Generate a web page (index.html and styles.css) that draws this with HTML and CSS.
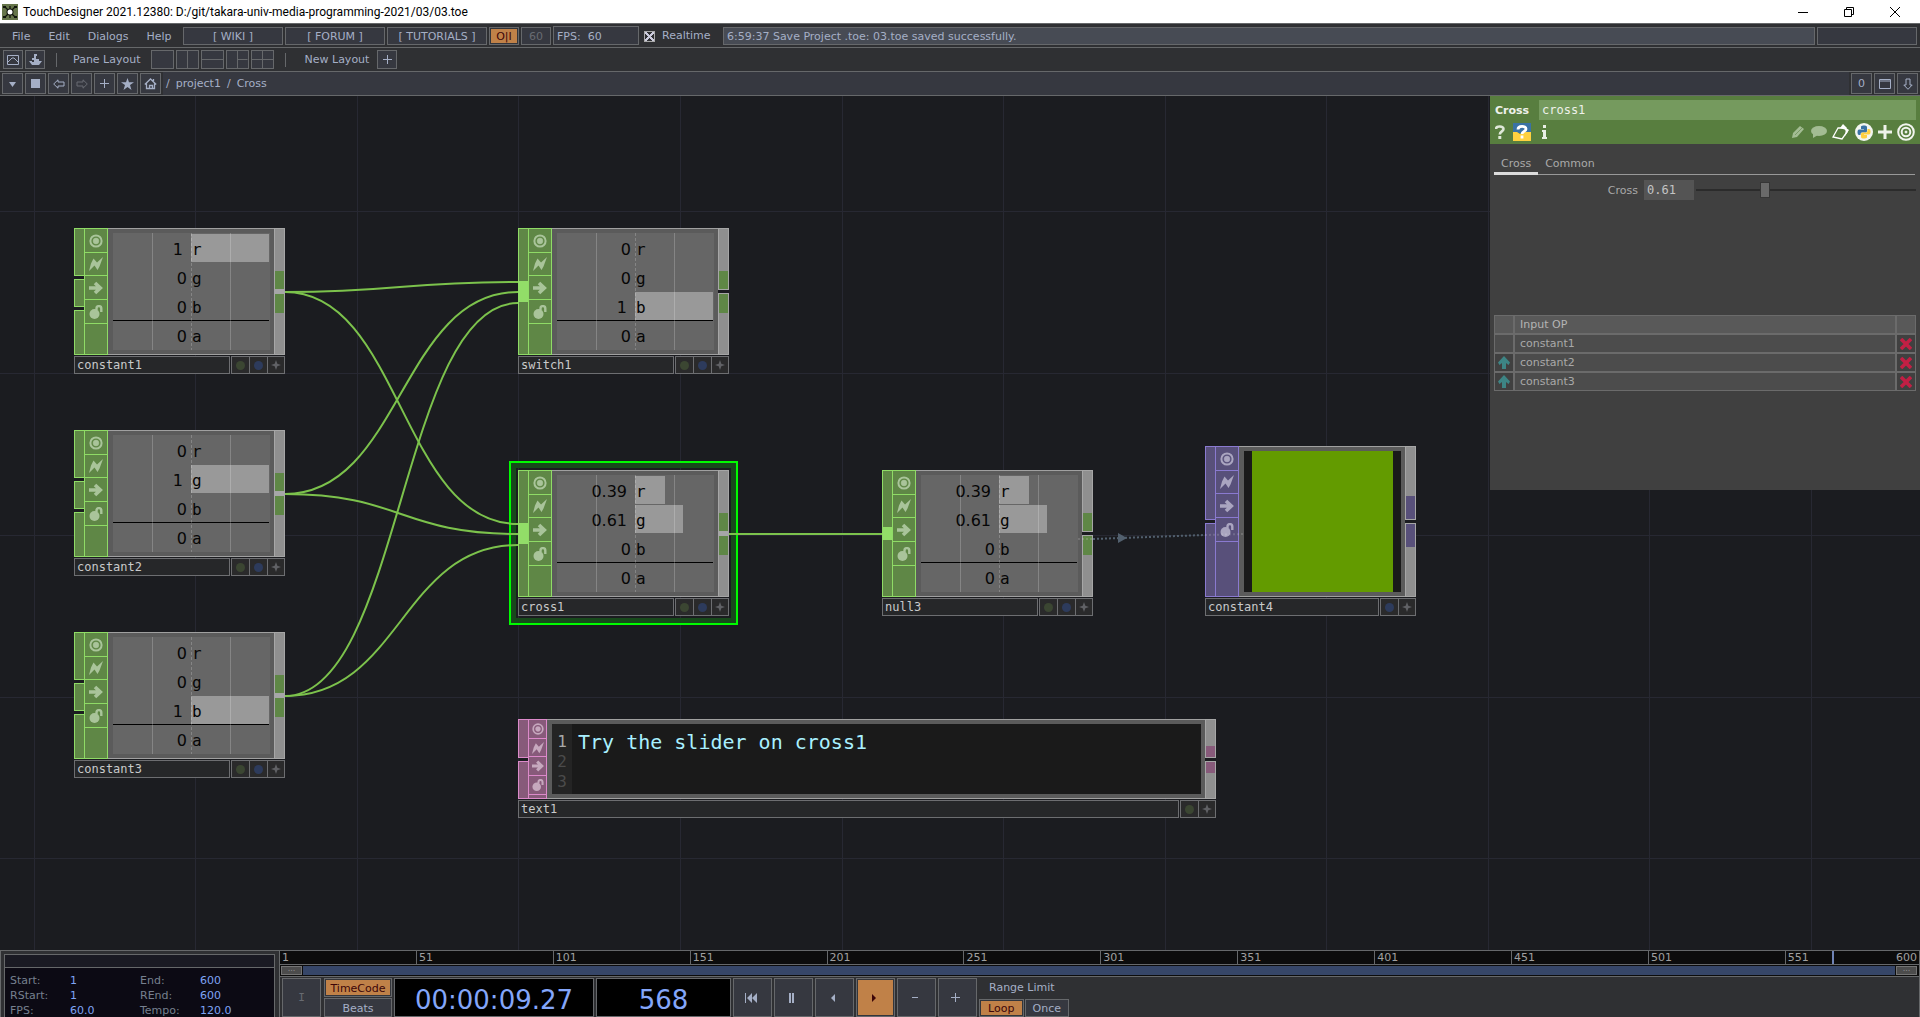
FILE: index.html
```html
<!DOCTYPE html>
<html lang="en">
<head>
<meta charset="utf-8">
<title>TouchDesigner 2021.12380: D:/git/takara-univ-media-programming-2021/03/03.toe</title>
<link rel="stylesheet" href="styles.css">
</head>
<body>
<svg class="defs" aria-hidden="true">
  <symbol id="i-view" viewBox="0 0 14 14"><circle cx="7" cy="7" r="5.6" fill="none" stroke="currentColor" stroke-width="2"/><circle cx="7" cy="7" r="2.9" fill="currentColor" stroke="currentColor" stroke-opacity=".5"/></symbol>
  <symbol id="i-bolt" viewBox="0 0 14 14"><path fill="currentColor" d="M14 0 10.500 9.500 8.500 13 5.500 8.500 0 14 2 6.500 4.500 1.500 8 5.500z"/></symbol>
  <symbol id="i-arrow" viewBox="0 0 14 14"><path fill="none" stroke="currentColor" stroke-width="3.600" d="M0 7h11M6 2l5.300 5L6 12"/></symbol>
  <symbol id="i-lock" viewBox="0 0 14 14"><circle cx="5.500" cy="9" r="5" fill="currentColor"/><path fill="none" stroke="currentColor" stroke-width="2.400" d="M7.500 5V3.500a2.300 2.300 0 0 1 4.800 0V7"/></symbol>
  <symbol id="i-star4" viewBox="0 0 10 10"><path fill="currentColor" d="M5 0 6.300 3.700 10 5 6.300 6.300 5 10 3.700 6.300 0 5 3.700 3.700z"/></symbol>
  <symbol id="i-x" viewBox="0 0 12 12"><path fill="none" stroke="#c21f44" stroke-width="3.600" d="M1 1l10 10M11 1 1 11"/></symbol>
  <symbol id="i-up" viewBox="0 0 12 13"><path fill="#3d8585" d="M6 0l6 6.500-1.500 2.500L8 7v6H4V7L1.500 9 0 6.500z"/></symbol>
</svg>

<header class="titlebar">
  <svg class="app-icon" width="16" height="16" viewBox="0 0 16 16"><path fill="#66754a" d="M0 0h16v16H0z"/><path d="M3 3l10 10M13 3 3 13M8 2v12" stroke="#11140c" stroke-width="1.300"/><path fill="#11140c" d="M1 2h3v2H1zM12 2h3v2h-3zM1 12h3v2H1zM12 12h3v2h-3z"/><circle cx="8" cy="8" r="3.500" fill="#11140c"/><circle cx="8" cy="8" r="2.500" fill="#fff"/></svg>
  <h1>TouchDesigner 2021.12380: D:/git/takara-univ-media-programming-2021/03/03.toe</h1>
  <div class="window-controls">
    <button aria-label="Minimize"><svg width="10" height="10"><path d="M0 5.500h10" stroke="#000"/></svg></button>
    <button aria-label="Restore"><svg width="10" height="10"><path d="M.5 2.500h7v7h-7zM2.500 2.500v-2h7v7h-2" fill="none" stroke="#000"/></svg></button>
    <button aria-label="Close"><svg width="10" height="10"><path d="M0 0l10 10M10 0 0 10" stroke="#000"/></svg></button>
  </div>
</header>

<nav class="bar menu">
  <div class="menu-items"><button>File</button><button>Edit</button><button>Dialogs</button><button>Help</button></div>
  <a class="box link" href="#wiki">[ WIKI ]</a>
  <a class="box link" href="#forum">[ FORUM ]</a>
  <a class="box link" href="#tutorials">[ TUTORIALS ]</a>
  <button class="box small on">O|I</button>
  <button class="box small dim">60</button>
  <output class="box fps">FPS:&nbsp; 60</output>
  <label class="realtime"><input type="checkbox" checked>Realtime</label>
  <output class="box status">6:59:37 Save Project .toe: 03.toe saved successfully.</output>
  <output class="box spare"></output>
</nav>

<div class="bar layouts">
  <button class="box tool" aria-label="Palette"><svg width="12" height="10"><path d="M.5.5h11v9H.5zM1 7l4-4h2l4 4" fill="none" stroke="currentColor"/></svg></button>
  <button class="box tool" aria-label="Place"><svg width="13" height="12" fill="currentColor"><path d="M5 0h3v2H7v3h3v2h3L10 11H3L0 7h3v1h2V6H3V4h2z"/></svg></button>
  <i class="rule"></i>
  <span>Pane Layout</span>
  <div class="panes">
    <button class="pane" aria-label="Single"></button>
    <button class="pane v" aria-label="Split columns"></button>
    <button class="pane h" aria-label="Split rows"></button>
    <button class="pane v hr" aria-label="Three panes"></button>
    <button class="pane v h both" aria-label="Four panes"></button>
  </div>
  <i class="rule"></i>
  <span class="new">New Layout</span>
  <button class="box tool" aria-label="Add layout"><svg width="9" height="9"><path d="M0 4.500h9M4.500 0v9" stroke="currentColor"/></svg></button>
</div>

<div class="bar path">
  <button class="box sq" aria-label="Pane type"><svg width="9" height="9"><path d="M1 3h7L4.500 8z" fill="currentColor"/></svg></button>
  <button class="box sq" aria-label="Stop"><svg width="9" height="9"><path d="M0 0h9v9H0z" fill="currentColor"/></svg></button>
  <button class="box sq" aria-label="Back"><svg width="12" height="10"><path d="M.7 5 5 .8V3h6v4H5v2.200z" fill="none" stroke="currentColor"/></svg></button>
  <button class="box sq dim" aria-label="Forward"><svg width="12" height="10"><path d="M11.300 5 7 .8V3H1v4h6v2.200z" fill="none" stroke="currentColor"/></svg></button>
  <button class="box sq" aria-label="Add"><svg width="9" height="9"><path d="M0 4.500h9M4.500 0v9" stroke="currentColor"/></svg></button>
  <button class="box sq" aria-label="Bookmark"><svg width="13" height="12"><path d="M6.500 0 8 4.200h5L9 7l1.500 5-4-3-4 3L4 7 0 4.200h5z" fill="currentColor"/></svg></button>
  <button class="box sq" aria-label="Home"><svg width="13" height="12"><path d="M.8 6.500 6.500 1l5.700 5.500M2.500 5.500v5h8v-5M5.500 10.500v-3h3v3M9.500 3V1" fill="none" stroke="currentColor" stroke-width="1.300"/></svg></button>
  <div class="crumbs"><span>/</span><a href="#project1">project1</a><span>/</span><a href="#cross">Cross</a></div>
  <button class="box sq">0</button>
  <button class="box sq" aria-label="Maximize pane"><svg width="12" height="10"><path d="M.5.5h11v9H.5zM0 2h12" fill="none" stroke="currentColor"/></svg></button>
  <button class="box sq" aria-label="Float pane"><svg width="10" height="12"><path d="M5 11.300.8 7H3V1h4v6h2.200z" fill="none" stroke="currentColor"/></svg></button>
</div>

<main class="network">
  <svg class="grid" width="100%" height="100%" aria-hidden="true"><path d="M34.500 0V854M195.500 0V854M357.500 0V854M518.500 0V854M680.500 0V854M842.500 0V854M1003.500 0V854M1165.500 0V854M1326.500 0V854M1488.500 0V854M1649.500 0V854M1811.500 0V854M0 115.500H1920M0 277.500H1920M0 439.500H1920M0 601.500H1920M0 762.500H1920" stroke="#272832"/></svg>

  <article class="node chop n-constant1">
    <div class="in three"><i></i><i></i><i></i></div>
    <div class="flags"><button aria-label="Viewer"><svg><use href="#i-view"/></svg></button><button aria-label="Bypass"><svg><use href="#i-bolt"/></svg></button><button aria-label="Export"><svg><use href="#i-arrow"/></svg></button><button aria-label="Lock"><svg><use href="#i-lock"/></svg></button></div>
    <div class="view"><div class="channels">
      <div class="ch live"><b>1</b><span><i style="width:100%"></i>r</span></div>
      <div class="ch"><b>0</b><span>g</span></div>
      <div class="ch"><b>0</b><span>b</span></div>
      <div class="ch"><b>0</b><span>a</span></div>
    </div></div>
    <div class="out joined"><i></i><i></i></div>
    <footer><h2>constant1</h2><button aria-label="Display"><i class="dot green"></i></button><button aria-label="Render"><i class="dot blue"></i></button><button aria-label="Active"><svg><use href="#i-star4"/></svg></button></footer>
  </article>

  <article class="node chop n-constant2">
    <div class="in three"><i></i><i></i><i></i></div>
    <div class="flags"><button aria-label="Viewer"><svg><use href="#i-view"/></svg></button><button aria-label="Bypass"><svg><use href="#i-bolt"/></svg></button><button aria-label="Export"><svg><use href="#i-arrow"/></svg></button><button aria-label="Lock"><svg><use href="#i-lock"/></svg></button></div>
    <div class="view"><div class="channels">
      <div class="ch"><b>0</b><span>r</span></div>
      <div class="ch live"><b>1</b><span><i style="width:100%"></i>g</span></div>
      <div class="ch"><b>0</b><span>b</span></div>
      <div class="ch"><b>0</b><span>a</span></div>
    </div></div>
    <div class="out joined"><i></i><i></i></div>
    <footer><h2>constant2</h2><button aria-label="Display"><i class="dot green"></i></button><button aria-label="Render"><i class="dot blue"></i></button><button aria-label="Active"><svg><use href="#i-star4"/></svg></button></footer>
  </article>

  <article class="node chop n-constant3">
    <div class="in three"><i></i><i></i><i></i></div>
    <div class="flags"><button aria-label="Viewer"><svg><use href="#i-view"/></svg></button><button aria-label="Bypass"><svg><use href="#i-bolt"/></svg></button><button aria-label="Export"><svg><use href="#i-arrow"/></svg></button><button aria-label="Lock"><svg><use href="#i-lock"/></svg></button></div>
    <div class="view"><div class="channels">
      <div class="ch"><b>0</b><span>r</span></div>
      <div class="ch"><b>0</b><span>g</span></div>
      <div class="ch live"><b>1</b><span><i style="width:100%"></i>b</span></div>
      <div class="ch"><b>0</b><span>a</span></div>
    </div></div>
    <div class="out joined"><i></i><i></i></div>
    <footer><h2>constant3</h2><button aria-label="Display"><i class="dot green"></i></button><button aria-label="Render"><i class="dot blue"></i></button><button aria-label="Active"><svg><use href="#i-star4"/></svg></button></footer>
  </article>

  <article class="node chop n-switch1">
    <div class="in wired"><i></i></div>
    <div class="flags"><button aria-label="Viewer"><svg><use href="#i-view"/></svg></button><button aria-label="Bypass"><svg><use href="#i-bolt"/></svg></button><button aria-label="Export"><svg><use href="#i-arrow"/></svg></button><button aria-label="Lock"><svg><use href="#i-lock"/></svg></button></div>
    <div class="view"><div class="channels">
      <div class="ch"><b>0</b><span>r</span></div>
      <div class="ch"><b>0</b><span>g</span></div>
      <div class="ch live"><b>1</b><span><i style="width:100%"></i>b</span></div>
      <div class="ch"><b>0</b><span>a</span></div>
    </div></div>
    <div class="out"><i></i><i></i></div>
    <footer><h2>switch1</h2><button aria-label="Display"><i class="dot green"></i></button><button aria-label="Render"><i class="dot blue"></i></button><button aria-label="Active"><svg><use href="#i-star4"/></svg></button></footer>
  </article>

  <div class="selection"></div>
  <article class="node chop n-cross1">
    <div class="in wired"><i></i></div>
    <div class="flags"><button aria-label="Viewer"><svg><use href="#i-view"/></svg></button><button aria-label="Bypass"><svg><use href="#i-bolt"/></svg></button><button aria-label="Export"><svg><use href="#i-arrow"/></svg></button><button aria-label="Lock"><svg><use href="#i-lock"/></svg></button></div>
    <div class="view"><div class="channels">
      <div class="ch live"><b>0.39</b><span><i style="width:39%"></i>r</span></div>
      <div class="ch live"><b>0.61</b><span><i style="width:61%"></i>g</span></div>
      <div class="ch"><b>0</b><span>b</span></div>
      <div class="ch"><b>0</b><span>a</span></div>
    </div></div>
    <div class="out joined"><i></i><i></i></div>
    <footer><h2>cross1</h2><button aria-label="Display"><i class="dot green"></i></button><button aria-label="Render"><i class="dot blue"></i></button><button aria-label="Active"><svg><use href="#i-star4"/></svg></button></footer>
  </article>

  <article class="node chop n-null3">
    <div class="in wired single"><i></i></div>
    <div class="flags"><button aria-label="Viewer"><svg><use href="#i-view"/></svg></button><button aria-label="Bypass"><svg><use href="#i-bolt"/></svg></button><button aria-label="Export"><svg><use href="#i-arrow"/></svg></button><button aria-label="Lock"><svg><use href="#i-lock"/></svg></button></div>
    <div class="view"><div class="channels">
      <div class="ch live"><b>0.39</b><span><i style="width:39%"></i>r</span></div>
      <div class="ch live"><b>0.61</b><span><i style="width:61%"></i>g</span></div>
      <div class="ch"><b>0</b><span>b</span></div>
      <div class="ch"><b>0</b><span>a</span></div>
    </div></div>
    <div class="out"><i></i><i></i></div>
    <footer><h2>null3</h2><button aria-label="Display"><i class="dot green"></i></button><button aria-label="Render"><i class="dot blue"></i></button><button aria-label="Active"><svg><use href="#i-star4"/></svg></button></footer>
  </article>

  <article class="node top n-constant4">
    <div class="in two"><i></i><i></i></div>
    <div class="flags"><button aria-label="Viewer"><svg><use href="#i-view"/></svg></button><button aria-label="Bypass"><svg><use href="#i-bolt"/></svg></button><button aria-label="Export"><svg><use href="#i-arrow"/></svg></button><button aria-label="Lock"><svg><use href="#i-lock"/></svg></button></div>
    <div class="view"><div class="swatch"></div></div>
    <div class="out"><i></i><i></i></div>
    <footer><h2>constant4</h2><button aria-label="Render"><i class="dot blue"></i></button><button aria-label="Active"><svg><use href="#i-star4"/></svg></button></footer>
  </article>

  <article class="node dat n-text1">
    <div class="in two"><i></i><i></i></div>
    <div class="flags"><button aria-label="Viewer"><svg><use href="#i-view"/></svg></button><button aria-label="Bypass"><svg><use href="#i-bolt"/></svg></button><button aria-label="Export"><svg><use href="#i-arrow"/></svg></button><button aria-label="Lock"><svg><use href="#i-lock"/></svg></button></div>
    <div class="view"><div class="editor"><ol><li>1</li><li>2</li><li>3</li></ol><p>Try the slider on cross1</p></div></div>
    <div class="out"><i></i><i></i></div>
    <footer><h2>text1</h2><button aria-label="Display"><i class="dot green"></i></button><button aria-label="Active"><svg><use href="#i-star4"/></svg></button></footer>
  </article>

  <svg class="wires" width="100%" height="100%" aria-hidden="true">
    <g fill="none" stroke="#7cc24c" stroke-width="2">
      <path d="M285 196C400 196 400 186 518 186"/>
      <path d="M285 196C401 196 401 428 518 428"/>
      <path d="M285 398C401 398 401 196 518 196"/>
      <path d="M285 398C401 398 401 438 518 438"/>
      <path d="M285 600C401 600 401 207 518 207"/>
      <path d="M285 600C401 600 401 449 518 449"/>
      <path d="M729 438H882"/>
    </g>
    <path d="M1093 443 1205 439" stroke="#52606e" stroke-width="2" stroke-dasharray="2 2"/>
    <path d="M1205 439 1244 438M1078 443h14" stroke="#fff" stroke-opacity=".15" stroke-width="2" stroke-dasharray="2 2"/>
    <path d="M1118 437l9 5-9 5z" fill="#52606e"/>
  </svg>

  <aside class="params">
    <div class="head">
      <div class="title"><label for="opname">Cross</label><input id="opname" value="cross1"></div>
      <div class="icons">
        <button aria-label="Help"><svg width="10" height="14"><path d="M1 4C1 1 8.500.5 8.500 4 8.500 6.500 4.800 6.300 4.800 9.500" fill="none" stroke="#dfe8d8" stroke-width="2.600"/><path d="M3.300 11h3v3h-3z" fill="#dfe8d8"/></svg></button>
        <button aria-label="Python help"><svg width="18" height="18"><path fill="#3a72a4" d="M0 0h18v10H0z"/><path fill="#ffd13f" d="M0 9h4l3 2 5-2h6v9H0z"/><path d="M5 6.500C5 2.500 13 2.500 13 6c0 2.500-4 2.300-4 5M9 12.500v3" fill="none" stroke="#fff" stroke-width="2.800"/></svg></button>
        <button aria-label="Info"><svg width="6" height="14"><path d="M1 0h3v3H1zM0 5h4v7h1v2H0v-2h1V7H0z" fill="#e8eee4"/></svg></button>
        <i class="grow"></i>
        <button aria-label="Edit"><svg width="14" height="14"><path d="M1 13 2 8 9 1l4 3-7 8z" fill="#a3bc93"/><path d="M4 10l7-7" stroke="#7a9a66"/></svg></button>
        <button aria-label="Comment"><svg width="17" height="14"><ellipse cx="9" cy="6" rx="8" ry="5" fill="#a3bc93"/><path d="M3 8v5l5-3z" fill="#a3bc93"/></svg></button>
        <button aria-label="Copy parameters"><svg width="18" height="16"><path d="M6 4 1 13l9 2 5-7-2-4z" fill="none" stroke="#fff" stroke-width="1.300"/><path d="M8 4l3-4 4 4-1 2zM14 4l3 2-4 6z" fill="#fff"/></svg></button>
        <button aria-label="Python"><svg width="18" height="18"><circle cx="9" cy="9" r="9" fill="#f2f5f0"/><path d="M6 3.500C7 2 12 2 12 4v4c0 1-1 1.500-2 1.500H7C5.500 9.500 5.500 11 5.500 12H4C2 12 2 6.500 4 6.500h5V6H6z" fill="#3a72a4"/><path d="M12 14.500C11 16 6 16 6 14v-3c0-1 1-1.500 2-1.500h3C12.500 9.500 12.500 8 12.500 6H14c2 0 2 5.500 0 5.500H9v.5h3z" fill="#ffcf3f"/></svg></button>
        <button aria-label="Add"><svg width="14" height="14"><path d="M0 7h14M7 0v14" stroke="#eef2ea" stroke-width="3"/></svg></button>
        <button aria-label="View"><svg width="18" height="18" fill="none" stroke="#f2f5ef" stroke-width="2"><circle cx="9" cy="9" r="7.800"/><circle cx="9" cy="9" r="4.300"/><circle cx="9" cy="9" r="1" fill="#fff" stroke-width="1"/></svg></button>
      </div>
    </div>
    <div class="tabs"><button class="active">Cross</button><button>Common</button></div>
    <div class="field"><label for="cross">Cross</label><input id="cross" class="num" value="0.61"><input type="range" aria-label="Cross" min="0" max="2" step="0.01" value="0.61"></div>
    <table>
      <tr><th></th><th scope="col">Input OP</th><th></th></tr>
      <tr><td></td><td>constant1</td><td class="act"><svg width="12" height="12"><use href="#i-x"/></svg></td></tr>
      <tr><td class="act"><svg width="12" height="13"><use href="#i-up"/></svg></td><td>constant2</td><td class="act"><svg width="12" height="12"><use href="#i-x"/></svg></td></tr>
      <tr><td class="act"><svg width="12" height="13"><use href="#i-up"/></svg></td><td>constant3</td><td class="act"><svg width="12" height="12"><use href="#i-x"/></svg></td></tr>
    </table>
  </aside>
</main>

<section class="timeline">
  <div class="info">
    <div class="info-box">
      <div class="info-head"></div>
      <dl><dt>Start:</dt><dd>1</dd><dt>End:</dt><dd>600</dd><dt>RStart:</dt><dd>1</dd><dt>REnd:</dt><dd>600</dd><dt>FPS:</dt><dd>60.0</dd><dt>Tempo:</dt><dd>120.0</dd></dl>
    </div>
  </div>
  <div class="transport">
    <div class="ruler"><span>1</span><span>51</span><span>101</span><span>151</span><span>201</span><span>251</span><span>301</span><span>351</span><span>401</span><span>451</span><span>501</span><span class="last">551<em>600</em></span><i class="playhead" style="left:94.7%"></i></div>
    <div class="range"><button aria-label="Range start">...</button><i></i><button aria-label="Range end">...</button></div>
    <div class="controls">
      <button class="box play dim mono">I</button>
      <div class="mode"><button class="box on">TimeCode</button><button class="box">Beats</button></div>
      <output class="box screen code">00:00:09.27</output>
      <output class="box screen frame">568</output>
      <button class="box play" aria-label="To start"><svg width="12" height="10" fill="currentColor"><path d="M0 0h1v10H0zM7 0v10L2 5zM12 0v10L7 5z"/></svg></button>
      <button class="box play" aria-label="Pause"><svg width="5" height="10" fill="currentColor"><path d="M0 0h2v10H0zM3 0h2v10H3z"/></svg></button>
      <button class="box play" aria-label="Play backwards"><svg width="4" height="8" fill="currentColor"><path d="M4 0v8L0 4z"/></svg></button>
      <button class="box play on" aria-label="Play"><svg width="4" height="8" fill="currentColor"><path d="M0 0v8l4-4z"/></svg></button>
      <button class="box play" aria-label="Step back"><svg width="6" height="9"><path d="M0 4.500h6" stroke="currentColor"/></svg></button>
      <button class="box play" aria-label="Step forward"><svg width="9" height="9"><path d="M0 4.500h9M4.500 0v9" stroke="currentColor"/></svg></button>
      <div class="limit"><span>Range Limit</span><div><button class="box on">Loop</button><button class="box">Once</button></div></div>
    </div>
  </div>
</section>
</body>
</html>
```
FILE: styles.css
```css
* { box-sizing: border-box; }
body {
  margin: 0;
  height: 100vh;
  display: flex;
  flex-direction: column;
  overflow: hidden;
  background: #2f3033;
  color: #a5afc6;
  font: 11px/14px "DejaVu Sans", Verdana, sans-serif;
}
button, input, output { font: inherit; color: inherit; }
button { background: none; border: 0; padding: 0; display: flex; align-items: center; justify-content: center; }
a { color: inherit; text-decoration: none; }
h1, h2, p, ol, dl, dd { margin: 0; padding: 0; font-weight: normal; }
svg { display: block; flex: none; }
.defs { position: absolute; width: 0; height: 0; }

/* window title */
.titlebar { height: 23px; flex: none; display: flex; align-items: center; background: #fff; color: #000; padding: 0 2px; gap: 5px; }
.titlebar h1 { flex: 1; font: 12px/16px Roboto, "Open Sans", sans-serif; }
.window-controls { display: flex; }
.window-controls button { width: 46px; height: 20px; }

/* toolbars */
.bar { height: 24px; flex: none; display: flex; align-items: center; border-top: 1px solid #66686a; }
.box { background: #363840; border: 1px solid #66686b; }
.on { background: #c08148; color: #3c0508; box-shadow: inset 0 0 0 1px #33353b; }
.dim { color: #686b72; }
.menu { gap: 2px; padding-right: 3px; }
.menu-items { display: flex; gap: 18px; width: 181px; padding: 2px 0 0 12px; }
.link { width: 100px; height: 18px; line-height: 18px; text-align: center; }
.small { width: 30px; height: 18px; padding-top: 2px; }
.fps { width: 86px; height: 19px; line-height: 19px; padding-left: 3px; }
.realtime { display: flex; align-items: center; gap: 7px; width: 80px; padding: 1px 0 0 3px; }
.realtime input { appearance: none; margin: 0; width: 11px; height: 11px; border: 1px solid #a9a9a9;
  background: linear-gradient(45deg, transparent 42%, #ccd 42% 58%, transparent 58%), linear-gradient(-45deg, transparent 42%, #ccd 42% 58%, transparent 58%); }
.status { flex: 1; height: 18px; line-height: 18px; padding-left: 3px; background: #474b54; }
.spare { width: 100px; height: 18px; }

.layouts { padding-left: 3px; gap: 2px; line-height: 16px; }
.layouts span { padding-top: 1px; }
.tool { width: 20px; height: 19px; }
.rule { width: 1px; height: 14px; background: #66686b; margin: 0 14px 0 9px; }
.panes { display: flex; gap: 2px; padding-left: 8px; }
.layouts .new { padding: 1px 6px 0 3px; }
.pane { width: 23px; height: 19px; border: 1px solid #66686b; background-color: #363840; background-repeat: no-repeat; background-position: center; --v: linear-gradient(#66686b, #66686b); }
.pane.v { background-image: var(--v); background-size: 1px 100%; }
.pane.h { background-image: var(--v); background-size: 100% 1px; }
.pane.hr { background-image: var(--v), var(--v); background-size: 1px 100%, 50% 1px; background-position: center, right center; }
.pane.both { background-image: var(--v), var(--v); background-size: 1px 100%, 100% 1px; }

.path { gap: 2px; padding: 0 2px; }
.sq { width: 21px; height: 21px; }
.crumbs { flex: 1; align-self: stretch; display: flex; gap: 6px; line-height: 24px; padding-left: 3px; background: #363840; }

/* network canvas */
.network { flex: 1; position: relative; overflow: hidden; border-top: 1px solid #66686a; background: #1b1c20; }
.grid, .wires { position: absolute; left: 0; top: 0; pointer-events: none; }

.node { position: absolute; width: 211px; display: grid; grid-template-columns: 10px 24px 1fr 11px; grid-template-rows: 127px 18px; row-gap: 1px; }
.n-constant1 { left: 74px; top: 132px; }
.n-constant2 { left: 74px; top: 334px; }
.n-constant3 { left: 74px; top: 536px; }
.n-switch1 { left: 518px; top: 132px; }
.n-cross1 { left: 518px; top: 374px; }
.n-null3 { left: 882px; top: 374px; }
.n-constant4 { left: 1205px; top: 350px; grid-template-rows: 151px 18px; }
.n-text1 { left: 518px; top: 623px; width: 698px; grid-template-columns: 10px 19px 1fr 11px; grid-template-rows: 80px 18px; }
.chop { --fill: #5f8746; --line: #8fdb66; --glyph: #a9c49a; --patch: 18px; }
.top { --fill: #58507a; --line: #8a7ad0; --glyph: #aaa5c0; --patch: 23px; }
.dat { --fill: #875a7a; --line: #dc8aca; --glyph: #c6a8be; --patch: 11px; }

.in { display: grid; gap: 3px; }
.in i { background: var(--fill); border: 1px solid var(--line); border-right: 0; }
.three { grid-template-rows: 48px 28px 1fr; }
.two { grid-template-rows: 1fr 1fr; }
.wired i { display: flex; align-items: center; }
.wired i::before { content: ""; width: 100%; height: 21px; background: #92dd68; }
.single i::before { height: 13px; }

.flags { display: grid; grid-template-rows: 24px 23px 24px 24px 1fr; background: var(--fill); border: 1px solid var(--line); color: var(--glyph); overflow: hidden; }
.flags button { border-bottom: 1px solid var(--line); }
.flags svg { width: 14px; height: 14px; }
.dat .flags { grid-template-rows: 19px 18px 19px 19px 1fr; }
.dat .flags svg { width: 12px; height: 12px; }

.view { padding: 4px 4px 4px 5px; background: #5b5b5b; border: solid #a0a0a0; border-width: 1px 0; }
.channels { position: relative; isolation: isolate; height: 117px; width: 157px; padding-top: 1px; background: #666; color: #060606; font: 16px/31px "DejaVu Sans Mono", monospace; }
.channels::after { content: ""; position: absolute; inset: 0; background:
  linear-gradient(90deg, transparent 39px, #ffffff33 39px 40px, transparent 40px 117px, #ffffff33 117px 118px, transparent 118px),
  repeating-linear-gradient(#ffffff33 0 3px, transparent 3px 5px) 78px 0 / 1px 100% no-repeat; }
.ch { display: grid; grid-template-columns: 78px 78px; width: 156px; height: 29px; }
.ch b { font: 16px/31px "DejaVu Sans", sans-serif; text-align: right; padding-right: 4px; }
.ch.live b { padding-right: 8px; }
.ch:nth-child(3) { border-bottom: 1px solid #000; }
.ch span { position: relative; height: 28px; text-indent: 1px; }
.ch span i { position: absolute; left: 0; top: 0; z-index: -1; height: 28px; background: #999; }

.swatch { height: 141px; background: #639b00; border: solid #1a1a1a; border-width: 0 8px; }

.editor { display: flex; height: 70px; padding-top: 8px; background: linear-gradient(90deg, #242424 20px, #1a1a1a 20px); }
.editor ol { list-style: none; width: 20px; text-align: center; color: #4b4b4b; font: 16px/20px "DejaVu Sans Mono", monospace; }
.editor li:first-child { color: #a8a8a8; }
.editor p { padding-left: 6px; color: #a9f0ff; font: 20px/20px "DejaVu Sans Mono", monospace; }

.out { display: grid; grid-template-rows: 1fr 1fr; gap: 3px; }
.out i { display: flex; background: #8f8f8f; border: 1px solid #a6a6a6; }
.out i:first-child { align-items: flex-end; }
.out i::before { content: ""; width: 100%; height: var(--patch); background: var(--fill); }
.joined { background: #a6a6a8; }
.chop .out i:last-child::before { height: 19px; }

.node footer { grid-column: 1 / -1; display: flex; color: #606165; }
.node footer h2 { flex: 1; margin-right: 1px; padding-left: 2px; border: 1px solid #6d6e71; background: #262729; color: #c9cacb; font: 12px/16px "DejaVu Sans Mono", monospace; }
.node footer button { width: 18px; border: solid #6d6e71; border-width: 1px 0 1px 1px; background: #2a2a2b; }
.node footer button:last-child { border-right-width: 1px; }
.node footer svg { width: 10px; height: 10px; }
.dot { width: 9px; height: 9px; border-radius: 50%; }
.dot.green { background: #3b4632; }
.dot.blue { background: #2d3b5c; }

.selection { position: absolute; left: 509px; top: 365px; width: 229px; height: 164px; border: 2px solid #00fb00; box-shadow: inset 0 0 0 5px #17491b; }

/* parameter window */
.params { position: absolute; right: 0; top: 0; width: 430px; height: 394px; background: #404040; color: #a9a9a9; }
.head { height: 48px; padding: 4px 4px 0 5px; background: #587e3f; color: #eef1ea; }
.title { display: flex; align-items: center; }
.title label { width: 44px; padding-top: 2px; font-weight: bold; }
.title input { flex: 1; min-width: 0; height: 20px; border: 0; padding: 0 3px; background: #759a5e; font: 12px/20px "DejaVu Sans Mono", monospace; }
.icons { display: flex; align-items: center; height: 18px; margin: 3px 1px 0 0; gap: 5px; }
.icons button:nth-child(2) { margin: 0 4px 0 3px; }
.grow { flex: 1; }
.icons button { min-width: 10px; }
.tabs { display: flex; height: 20px; margin: 11px 5px 0 4px; background: linear-gradient(#999, #999) 0 19px / 100% 1px no-repeat; }
.tabs button { padding: 0 7px 2px; height: 20px; }
.tabs .active { border-bottom: 3px solid #dcdcdc; padding: 1px 7px 0; }
.field { display: flex; align-items: center; margin: 5px 4px 0 0; }
.field label { width: 148px; padding-top: 2px; text-align: right; }
.num { width: 50px; height: 20px; border: 0; margin: 0 2px 0 6px; padding: 0 3px; background: #545454; color: #c4c4c4; font: 12px/20px "DejaVu Sans Mono", monospace; }
.field input[type=range] { appearance: none; flex: 1; min-width: 0; margin: 0; height: 16px; background: linear-gradient(#2b2b2b, #2b2b2b) 0 7px / 100% 2px no-repeat; }
.field input[type=range]::-webkit-slider-thumb { appearance: none; width: 10px; height: 16px; background: #6a6a6a; border: 1px solid #363636; }
.params table { width: 422px; margin: 115px 4px 0; border-spacing: 0; table-layout: fixed; background: #4c4c4c; }
th, td { height: 19px; padding: 1px 5px 0; border: 1px solid #6b6b6b; font-weight: normal; text-align: left; line-height: 16px; }
th { background: #595959; color: #b4b4b4; }
th:first-child, th:last-child { width: 20px; }
td.act { padding: 0 3px; background: #404040; }

/* timeline */
.timeline { flex: none; height: 67px; display: grid; grid-template-columns: 279px 1fr; }
.info { border-top: 1px solid #66686a; border-left: 1px solid #66686a; padding: 3px 4px 0 3px; }
.info-box { height: 63px; border: 1px solid #66686a; border-bottom: 0; background: #0c0a14; }
.info-head { height: 13px; background: #1a1a23; border-bottom: 1px solid #66686a; }
dl { display: grid; grid-template-columns: 60px 70px 60px 1fr; padding: 5px 0 0 5px; line-height: 15px; color: #76808f; }
dd { color: #7fa4f5; }
.transport { min-width: 0; border: solid #66686a; border-width: 1px 1px 0; }
.ruler { position: relative; display: grid; grid-template-columns: repeat(11, 50fr) 49fr; height: 14px; background: #0c0c0c; border-bottom: 1px solid #66686a; color: #a0a0a0; line-height: 14px; margin-left: -1px; }
.ruler span { border-left: 1px solid #66686a; padding-left: 2px; }
.last { display: flex; justify-content: space-between; }
.last em { font-style: normal; padding-right: 2px; }
.playhead { position: absolute; top: 0; width: 2px; height: 13px; background: #6f83b4; }
.range { display: flex; gap: 1px; height: 12px; padding: 1px 2px 1px 1px; background: #0c0c0c; border-bottom: 1px solid #66686a; }
.range i { flex: 1; background: #364668; height: 9px; }
.range button { width: 21px; height: 9px; border: 1px solid #747474; background: #4c4c4c; color: #909090; font-size: 8px; line-height: 4px; padding-bottom: 3px; }
.controls { display: flex; gap: 2px; height: 40px; padding: 1px 0 0 2px; }
.play { width: 39px; height: 39px; }
.play svg { margin-right: 4px; }
.mono { font-family: "DejaVu Sans Mono", monospace; margin-right: 1px; }
.mode { display: grid; gap: 1px; width: 68px; grid-template-rows: 19px 19px; }
.mode button, .limit button { padding-top: 2px; }
.screen { background: #000; color: #84a6fa; font: 26px/43px "DejaVu Sans", sans-serif; text-align: center; overflow: hidden; }
.code { width: 200px; }
.frame { width: 135px; }
.limit { display: flex; flex-direction: column; justify-content: space-between; width: 90px; padding-top: 3px; }
.limit span { padding-left: 10px; }
.limit div { display: flex; gap: 1px; }
.limit button { flex: 1; height: 18px; }
```
